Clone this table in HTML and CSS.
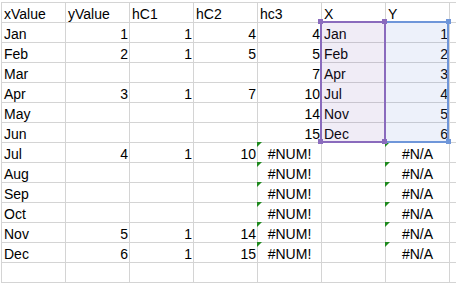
FILE: index.html
```html
<!DOCTYPE html>
<html>
<head>
<meta charset="utf-8">
<link rel="stylesheet" href="styles.css">
</head>
<body>
<div class="sheet">
  <div class="grid">
    <div class="c">xValue</div><div class="c">yValue</div><div class="c">hC1</div><div class="c">hC2</div><div class="c">hc3</div><div class="c">X</div><div class="c">Y</div><div class="c"></div>

    <div class="c">Jan</div><div class="c n">1</div><div class="c n">1</div><div class="c n">4</div><div class="c n">4</div><div class="c">Jan</div><div class="c n">1</div><div class="c"></div>
    <div class="c">Feb</div><div class="c n">2</div><div class="c n">1</div><div class="c n">5</div><div class="c n">5</div><div class="c">Feb</div><div class="c n">2</div><div class="c"></div>
    <div class="c">Mar</div><div class="c"></div><div class="c"></div><div class="c"></div><div class="c n">7</div><div class="c">Apr</div><div class="c n">3</div><div class="c"></div>
    <div class="c">Apr</div><div class="c n">3</div><div class="c n">1</div><div class="c n">7</div><div class="c n">10</div><div class="c">Jul</div><div class="c n">4</div><div class="c"></div>
    <div class="c">May</div><div class="c"></div><div class="c"></div><div class="c"></div><div class="c n">14</div><div class="c">Nov</div><div class="c n">5</div><div class="c"></div>
    <div class="c">Jun</div><div class="c"></div><div class="c"></div><div class="c"></div><div class="c n">15</div><div class="c">Dec</div><div class="c n">6</div><div class="c"></div>

    <div class="c">Jul</div><div class="c n">4</div><div class="c n">1</div><div class="c n">10</div><div class="c e">#NUM!</div><div class="c"></div><div class="c e">#N/A</div><div class="c"></div>
    <div class="c">Aug</div><div class="c"></div><div class="c"></div><div class="c"></div><div class="c e">#NUM!</div><div class="c"></div><div class="c e">#N/A</div><div class="c"></div>
    <div class="c">Sep</div><div class="c"></div><div class="c"></div><div class="c"></div><div class="c e">#NUM!</div><div class="c"></div><div class="c e">#N/A</div><div class="c"></div>
    <div class="c">Oct</div><div class="c"></div><div class="c"></div><div class="c"></div><div class="c e">#NUM!</div><div class="c"></div><div class="c e">#N/A</div><div class="c"></div>
    <div class="c">Nov</div><div class="c n">5</div><div class="c n">1</div><div class="c n">14</div><div class="c e">#NUM!</div><div class="c"></div><div class="c e">#N/A</div><div class="c"></div>
    <div class="c">Dec</div><div class="c n">6</div><div class="c n">1</div><div class="c n">15</div><div class="c e">#NUM!</div><div class="c"></div><div class="c e">#N/A</div><div class="c"></div>

    <div class="c"></div><div class="c"></div><div class="c"></div><div class="c"></div><div class="c"></div><div class="c"></div><div class="c"></div><div class="c"></div>
  </div>

  <div class="range blue"></div>
  <div class="range purple"></div>
  <div class="h hb" style="left:445px;top:17px"></div>
  <div class="h hb" style="left:445px;top:137px"></div>
  <div class="h hp" style="left:317px;top:17px"></div>
  <div class="h hp" style="left:381px;top:17px"></div>
  <div class="h hp" style="left:317px;top:137px"></div>
  <div class="h hp" style="left:381px;top:137px"></div>
</div>
</body>
</html>
```

FILE: styles.css
```css
html, body {
  margin: 0;
  padding: 0;
  background: #fff;
  overflow: hidden;
}
body {
  width: 456px;
  height: 283px;
}
.sheet {
  position: relative;
  margin: 2px 0 0 1px;
  width: 455px;
  font-family: "Liberation Sans", Arial, sans-serif;
  font-size: 14px;
  color: #000;
}
.grid {
  display: grid;
  grid-template-columns: repeat(7, 64px) 6px;
  grid-auto-rows: 20px;
  border-top: 1px solid #d4d4d4;
  border-left: 1px solid #d4d4d4;
}
.c {
  position: relative;
  box-sizing: border-box;
  border-right: 1px solid #d4d4d4;
  border-bottom: 1px solid #d4d4d4;
  padding: 4px 2px 0 2px;
  line-height: 15px;
  white-space: nowrap;
}
.c:nth-child(8n) {
  border-right: none;
  padding: 0;
}
.n {
  text-align: right;
  padding-right: 1px;
}
.e {
  text-align: center;
}
.e::before {
  content: "";
  position: absolute;
  left: -1px;
  top: -1px;
  width: 0;
  height: 0;
  border-top: 5px solid #1f8a1f;
  border-right: 5px solid transparent;
}
.range {
  position: absolute;
  box-sizing: border-box;
  border: 2px solid;
}
.purple {
  left: 319px;
  top: 19px;
  width: 66px;
  height: 122px;
  border-color: #8a6bbd;
  background: rgba(120, 80, 175, 0.11);
}
.blue {
  left: 383px;
  top: 19px;
  width: 65px;
  height: 122px;
  border-color: #6f96d9;
  background: rgba(90, 130, 210, 0.11);
}
.h {
  position: absolute;
  width: 5px;
  height: 5px;
}
.hp { background: #8a6bbd; }
.hb { background: #6f96d9; }
```
